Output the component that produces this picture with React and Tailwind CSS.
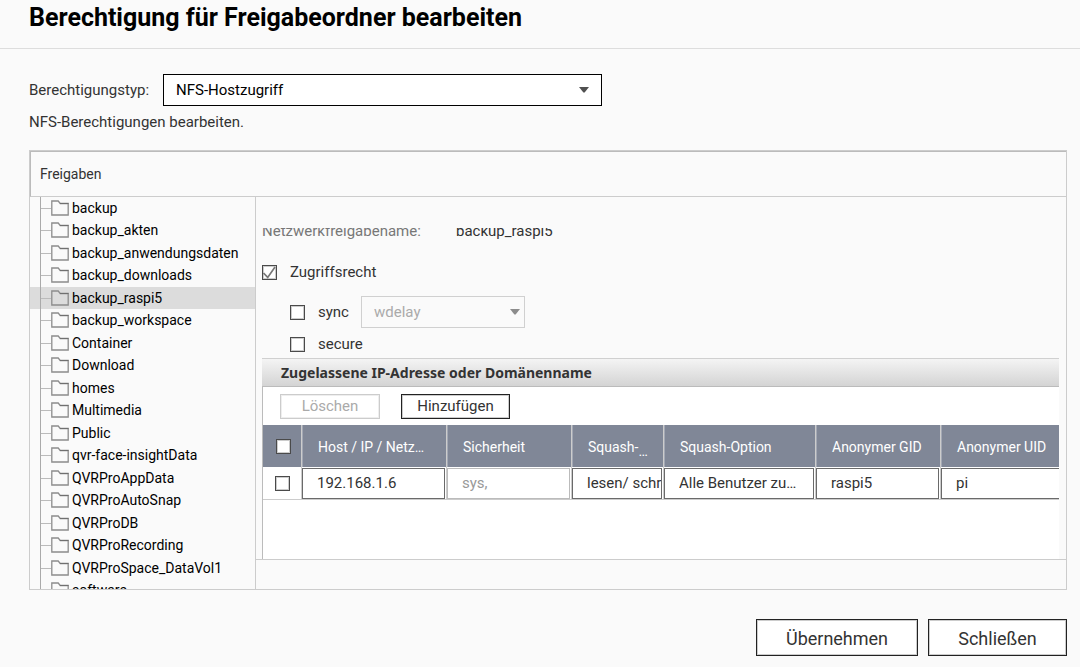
import { useState } from 'react'

const FOLDERS = [
  'backup', 'backup_akten', 'backup_anwendungsdaten', 'backup_downloads', 'backup_raspi5',
  'backup_workspace', 'Container', 'Download', 'homes', 'Multimedia', 'Public',
  'qvr-face-insightData', 'QVRProAppData', 'QVRProAutoSnap', 'QVRProDB', 'QVRProRecording',
  'QVRProSpace_DataVol1', 'software',
]

const COLUMNS = [
  { key: 'host',     label: 'Host / IP / Netz…', width: 'w-[145px]' },
  { key: 'security', label: 'Sicherheit',        width: 'w-[125px]' },
  { key: 'access',   label: 'Squash-', more: true, width: 'w-[92px]' },
  { key: 'squash',   label: 'Squash-Option',     width: 'w-[152px]' },
  { key: 'gid',      label: 'Anonymer GID',      width: 'w-[125px]' },
  { key: 'uid',      label: 'Anonymer UID',      width: '' },
]

const INITIAL_HOST = {
  host: '192.168.1.6',
  security: 'sys,',
  access: 'lesen/ schreiben',
  squash: 'Alle Benutzer zu…',
  gid: 'raspi5',
  uid: 'pi',
}

function Arrow({ className }) {
  return (
    <svg viewBox="0 0 10 6" className={`absolute top-1/2 -translate-y-1/2 w-[10px] h-[6px] pointer-events-none ${className}`}>
      <path d="M0 0h10L5.6 5.6h-1.2z" fill="currentColor" />
    </svg>
  )
}

function FolderIcon() {
  return (
    <svg viewBox="0 0 18 16" className="w-[18px] h-4 shrink-0" fill="none">
      <path d="M.8 15V1h6.4l2 2.5h8V15z" stroke="#8c8c8c" strokeWidth="1.3" />
      <path d="M9 3.5h8.5" stroke="#707070" />
    </svg>
  )
}

function Checkbox(props) {
  return (
    <span className="grid shrink-0 w-[15px] h-[15px]">
      <input
        type="checkbox"
        className="peer [grid-area:1/1] appearance-none w-[15px] h-[15px] border border-[#4a4a4a] bg-white shadow-[inset_0_0_0_1px_#ccc]"
        {...props}
      />
      <svg viewBox="0 0 15 15" className="[grid-area:1/1] w-[15px] h-[15px] pointer-events-none invisible peer-checked:visible" fill="none">
        <path d="M1.5 8l4.2 4.4L13 2" stroke="#777" strokeWidth="1.7" />
      </svg>
    </span>
  )
}

export default function App() {
  const [selected, setSelected] = useState('backup_raspi5')
  const [access, setAccess] = useState(true)
  const [host, setHost] = useState(INITIAL_HOST)

  return (
    <div className="h-screen min-h-[500px] flex flex-col bg-[#fafafa] text-[#333] text-[15px] leading-5 font-[Roboto,sans-serif]">
      <header className="h-[49px] shrink-0 border-b border-[#ddd] pl-[29px] pt-[2px]">
        <h1 className="text-[25px] leading-8 font-bold text-black whitespace-nowrap">Berechtigung für Freigabeordner bearbeiten</h1>
      </header>

      <main className="flex-1 min-h-0 flex flex-col pl-[29px] pr-[13px] pt-[25px] pb-[11px]">
        <div className="flex items-center">
          <label htmlFor="type" className="w-[134px]">Berechtigungstyp:</label>
          <div className="relative w-[439px]">
            <select id="type" className="block w-full h-8 appearance-none border border-black bg-white text-black pl-3 pr-8">
              <option>NFS-Hostzugriff</option>
            </select>
            <Arrow className="right-[13px] text-[#505050]" />
          </div>
        </div>
        <p className="mt-[6px]">NFS-Berechtigungen bearbeiten.</p>

        <section className="mt-[18px] flex-1 min-h-0 flex flex-col border border-[#ccc]">
          <h2 className="h-[46px] shrink-0 flex items-center border-t border-l border-b border-t-[#bbb] border-l-[#bbb] border-b-[#ccc] pl-[9px] text-sm">Freigaben</h2>

          <div className="flex-1 min-h-0 flex">
            {/* Folder tree */}
            <ul className="w-[226px] shrink-0 overflow-hidden border-r border-[#ccc] text-sm text-black">
              {FOLDERS.map(name => (
                <li key={name} className={`odd:h-[22px] even:h-[23px] pl-[10px] ${name === selected ? 'bg-[#dcdcdc]' : ''}`}>
                  <button
                    onClick={() => setSelected(name)}
                    className="h-full w-full flex items-start border-l border-[#aaa] pt-px text-left whitespace-nowrap"
                  >
                    <span className="h-5 flex items-center">
                      <span className="w-[10px] h-px bg-[#bbb]" />
                      <FolderIcon />
                      <span className="ml-[3px]">{name}</span>
                    </span>
                  </button>
                </li>
              ))}
            </ul>

            {/* Settings of the selected folder */}
            <div className="flex-1 min-w-0 flex flex-col pt-[31px]">
              <div className="flex-1 min-h-0 overflow-hidden flex flex-col border-b border-[#ccc] pl-[6px] pr-[7px]">
                <div className="-mt-[7px] shrink-0 flex">
                  <span className="w-[194px] text-[#777]">Netzwerkfreigabename:</span>
                  <span>{selected}</span>
                </div>
                <label className="mt-[21px] shrink-0 flex items-center gap-[13px]">
                  <Checkbox checked={access} onChange={e => setAccess(e.target.checked)} />
                  Zugriffsrecht
                </label>
                <div className="mt-[14px] shrink-0 pl-7 flex items-center">
                  <label className="flex items-center gap-[13px] w-[71px]">
                    <Checkbox />
                    sync
                  </label>
                  <div className="relative w-[164px]">
                    <select disabled aria-label="wdelay" className="block w-full h-8 appearance-none border border-[#d0d0d0] text-[#aaa] pl-3 opacity-100">
                      <option>wdelay</option>
                    </select>
                    <Arrow className="right-[5px] text-[#8c8c8c]" />
                  </div>
                </div>
                <label className="mt-[6px] shrink-0 ml-7 flex items-center gap-[13px]">
                  <Checkbox />
                  secure
                </label>

                <h3 className="mt-1 h-[29px] shrink-0 flex items-center border-t border-b border-t-[#d0d0d0] border-b-[#bbb] bg-linear-to-b from-[#f4f4f4] to-[#d4d4d4] pl-[19px] font-['Noto_Sans',sans-serif] text-sm font-bold">
                  Zugelassene IP-Adresse oder Domänenname
                </h3>
                <div className="flex-1 min-h-0 overflow-hidden border-l border-[#bbb] bg-white">
                  <div className="h-[38px] flex items-center pl-[17px] gap-[21px]">
                    <button disabled className="w-[100px] h-[25px] border border-[#ccc] text-[#aaa] shadow-[inset_0_0_0_1px_#eee]">Löschen</button>
                    <button className="w-[109px] h-[25px] border border-[#222] shadow-[inset_0_0_0_1px_#ccc]">Hinzufügen</button>
                  </div>

                  <table className="table-fixed w-full min-w-[803px] border-separate border-spacing-0">
                    <thead>
                      <tr className="h-[42px] bg-[#808797] text-white text-sm text-left">
                        <th className="w-[39px] border-r border-[#ccc] pl-[13px]">
                          <Checkbox aria-label="Alle auswählen" />
                        </th>
                        {COLUMNS.map(c => (
                          <th key={c.key} className={`${c.width} border-r border-l border-r-[#ccc] border-l-[#a4a9b5] pl-[15px] pt-[2px] font-normal leading-5 whitespace-nowrap`}>
                            {c.label}
                            {c.more && <span className="align-sub leading-none">…</span>}
                          </th>
                        ))}
                      </tr>
                    </thead>
                    <tbody>
                      <tr className="h-[33px]">
                        <td className="border-r border-b border-[#ccc] pl-3">
                          <Checkbox aria-label={host.host} />
                        </td>
                        {COLUMNS.map(c => (
                          <td key={c.key} className="border-r border-b border-[#ccc] p-0 pr-px">
                            <input
                              type="text"
                              aria-label={c.label}
                              value={host[c.key]}
                              disabled={c.key === 'security'}
                              onChange={e => setHost({ ...host, [c.key]: e.target.value })}
                              className="block w-full h-[31px] border border-[#6a6a6a] bg-white pl-[14px] disabled:border-[#bbb] disabled:text-[#999]"
                            />
                          </td>
                        ))}
                      </tr>
                    </tbody>
                  </table>
                </div>
              </div>
              <div className="h-[29px] shrink-0" />
            </div>
          </div>
        </section>

        <footer className="mt-[29px] shrink-0 flex justify-end gap-[10px] text-lg">
          <button className="w-[162px] h-[37px] border border-[#222] bg-white pt-[2px] shadow-[inset_0_0_0_1px_#ccc]">Übernehmen</button>
          <button className="w-[139px] h-[37px] border border-[#222] bg-white pt-[2px] shadow-[inset_0_0_0_1px_#ccc]">Schließen</button>
        </footer>
      </main>
    </div>
  )
}
